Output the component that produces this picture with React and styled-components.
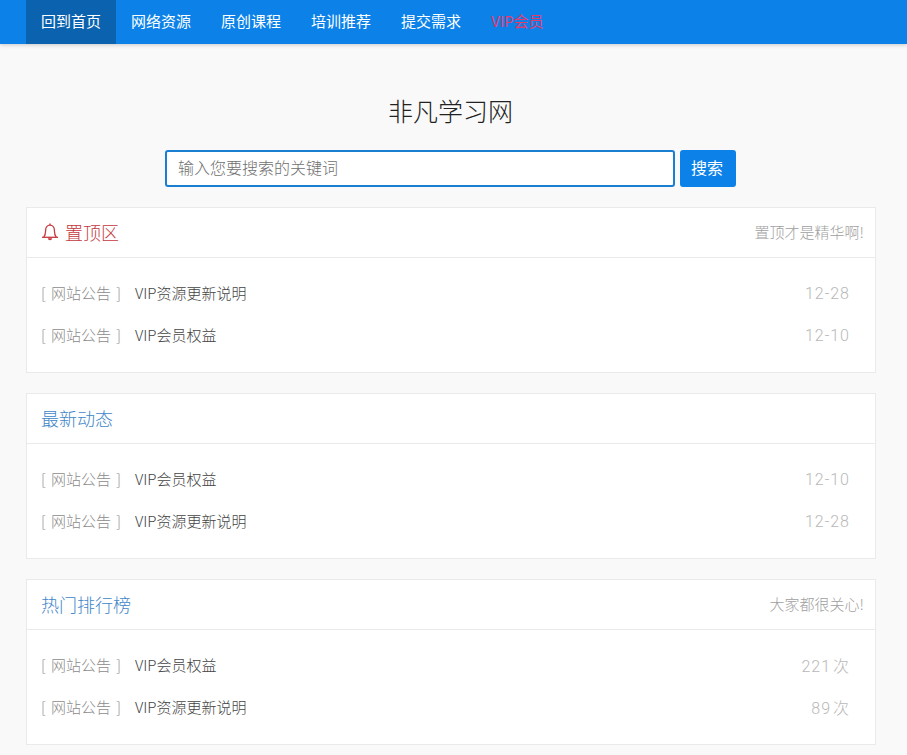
import React from 'react';
import styled, { createGlobalStyle } from 'styled-components';

const GlobalStyle = createGlobalStyle`
  * {
    box-sizing: border-box;
  }
  html, body {
    margin: 0;
    height: 100%;
    overflow: hidden;
  }
  body {
    background: #f9f9f9;
    color: #333;
    font-family: 'Noto Sans CJK SC', 'Liberation Sans', sans-serif;
    font-size: 15px;
    font-weight: 300;
  }
`;

const NavBar = styled.nav`
  height: 44px;
  padding: 0 26px;
  display: flex;
  background: #0c82e9;
  box-shadow: 0 1px 4px rgba(0, 0, 0, 0.2);
`;

const NavLink = styled.a`
  height: 44px;
  padding: 0 15px;
  line-height: 42px;
  font-size: 15px;
  font-weight: 400;
  white-space: nowrap;
  color: ${p => (p.$vip ? '#e6396c' : '#fff')};
  background: ${p => (p.$active ? '#0b62ae' : 'transparent')};
`;

const Main = styled.main`
  padding: 0 31px 0 26px;
`;

const Title = styled.h1`
  margin: 0;
  padding: 50px 1px 0 0;
  height: 106px;
  text-align: center;
  font-size: 25px;
  font-weight: 300;
  line-height: 32px;
  color: #222;
`;

const SearchForm = styled.form`
  display: flex;
  justify-content: center;
  gap: 5px;
  padding-right: 1px;
  margin-bottom: 20px;
`;

const SearchInput = styled.input`
  width: 510px;
  height: 37px;
  padding: 0 11px 3px;
  border: 2px solid #1a7fd0;
  border-radius: 3px;
  outline: none;
  background: #fff;
  font-family: inherit;
  font-size: 16px;
  font-weight: 300;
  &::placeholder {
    color: #707070;
    opacity: 1;
  }
`;

const SearchButton = styled.button`
  width: 56px;
  height: 37px;
  padding: 0 2px 3px 0;
  border: none;
  border-radius: 3px;
  background: #0c82e9;
  color: #fff;
  font-family: inherit;
  font-size: 16px;
`;

const Card = styled.section`
  margin-bottom: 20px;
  background: #fff;
  border: 1px solid #eaeaea;
`;

const CardHeader = styled.header`
  height: 50px;
  padding: 0 11px 2px 14px;
  display: flex;
  align-items: center;
  justify-content: space-between;
  border-bottom: 1px solid #eaeaea;
`;

const CardTitle = styled.h2`
  margin: 0;
  display: flex;
  align-items: center;
  gap: 6px;
  font-size: 18px;
  font-weight: 300;
  color: ${p => (p.$hot ? '#c4383e' : '#3f85c8')};
`;

const CardNote = styled.span`
  font-size: 15px;
  color: #a0a0a0;
`;

const CardBody = styled.ul`
  margin: 0;
  padding: 15px 25px 15px 14px;
  list-style: none;
`;

const Row = styled.li`
  height: 42px;
  padding-bottom: 4px;
  display: flex;
  align-items: center;
`;

const Tag = styled.span`
  width: 94px;
  flex: none;
  color: #8c8c8c;
  word-spacing: 2px;
  white-space: pre;
`;

const RowLink = styled.a`
  flex: 1;
  color: #444;
`;

const RowMeta = styled.span`
  padding-top: 2px;
  font-family: Roboto, 'Noto Sans CJK SC', sans-serif;
  font-size: 16px;
  font-weight: 300;
  letter-spacing: 1px;
  word-spacing: -3px;
  color: #b8b8b8;
`;

const BellIcon = () => (
  <svg width="18" height="18" viewBox="0 0 18 18" fill="none" stroke="currentColor" strokeWidth="1.3">
    <path d="M9 0.5V2.2" />
    <path d="M2.8 14C4.4 12 4.6 10 4.6 7.4C4.6 4.4 6.4 2.2 9 2.2C11.6 2.2 13.4 4.4 13.4 7.4C13.4 10 13.6 12 15.2 14" />
    <path d="M1 14.3H17" />
    <path d="M6.9 15.2a2.1 2.1 0 0 0 4.2 0z" fill="currentColor" stroke="none" />
  </svg>
);

const sections = [
  {
    title: '置顶区',
    hot: true,
    note: '置顶才是精华啊!',
    rows: [
      ['VIP资源更新说明', '12-28'],
      ['VIP会员权益', '12-10'],
    ],
  },
  {
    title: '最新动态',
    rows: [
      ['VIP会员权益', '12-10'],
      ['VIP资源更新说明', '12-28'],
    ],
  },
  {
    title: '热门排行榜',
    note: '大家都很关心!',
    rows: [
      ['VIP会员权益', '221 次'],
      ['VIP资源更新说明', '89 次'],
    ],
  },
];

const navItems = ['回到首页', '网络资源', '原创课程', '培训推荐', '提交需求'];

export default function App() {
  return (
    <>
      <GlobalStyle />
      <NavBar>
        {navItems.map((item, i) => (
          <NavLink key={item} $active={i === 0}>{item}</NavLink>
        ))}
        <NavLink $vip>VIP会员</NavLink>
      </NavBar>
      <Main>
        <Title>非凡学习网</Title>
        <SearchForm>
          <SearchInput placeholder="输入您要搜索的关键词" />
          <SearchButton type="button">搜索</SearchButton>
        </SearchForm>
        {sections.map(section => (
          <Card key={section.title}>
            <CardHeader>
              <CardTitle $hot={section.hot}>
                {section.hot && <BellIcon />}
                {section.title}
              </CardTitle>
              {section.note && <CardNote>{section.note}</CardNote>}
            </CardHeader>
            <CardBody>
              {section.rows.map(([label, meta]) => (
                <Row key={label}>
                  <Tag>{'[ 网站公告 ]'}</Tag>
                  <RowLink>{label}</RowLink>
                  <RowMeta>{meta}</RowMeta>
                </Row>
              ))}
            </CardBody>
          </Card>
        ))}
      </Main>
    </>
  );
}
